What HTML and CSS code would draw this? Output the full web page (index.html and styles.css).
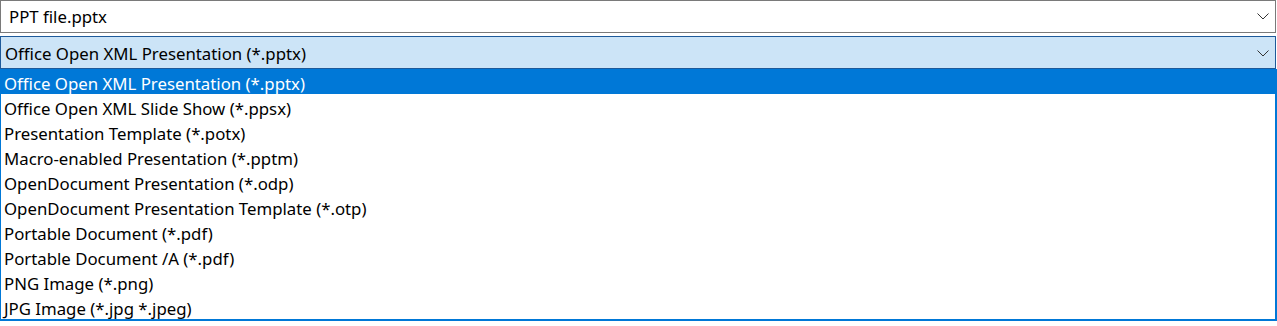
FILE: index.html
```html
<!DOCTYPE html>
<html>
<head>
<meta charset="utf-8">
<link rel="stylesheet" href="styles.css">
</head>
<body>
<div class="page">
  <div class="field">
    <span class="field-text">PPT file.pptx</span>
    <svg class="chev" width="12" height="7" viewBox="0 0 12 7"><path d="M0.5 0.5 L6 6 L11.5 0.5" fill="none" stroke="#333" stroke-width="1"/></svg>
  </div>
  <div class="dropdown">
    <div class="combo">
      <span class="combo-text">Office Open XML Presentation (*.pptx)</span>
      <svg class="chev" width="12" height="7" viewBox="0 0 12 7"><path d="M0.5 0.5 L6 6 L11.5 0.5" fill="none" stroke="#333" stroke-width="1"/></svg>
    </div>
    <ul class="list">
      <li class="item selected">Office Open XML Presentation (*.pptx)</li>
      <li class="item">Office Open XML Slide Show (*.ppsx)</li>
      <li class="item">Presentation Template (*.potx)</li>
      <li class="item">Macro-enabled Presentation (*.pptm)</li>
      <li class="item">OpenDocument Presentation (*.odp)</li>
      <li class="item">OpenDocument Presentation Template (*.otp)</li>
      <li class="item">Portable Document (*.pdf)</li>
      <li class="item">Portable Document /A (*.pdf)</li>
      <li class="item">PNG Image (*.png)</li>
      <li class="item">JPG Image (*.jpg *.jpeg)</li>
    </ul>
  </div>
</div>
</body>
</html>
```
FILE: styles.css
```css
html, body {
  margin: 0;
  padding: 0;
  background: #ffffff;
}
.page {
  width: 1277px;
  font-family: "Noto Sans", "Open Sans", sans-serif;
  font-size: 16.8px;
  color: #000;
  display: flex;
  flex-direction: column;
  gap: 3px;
}
.field {
  box-sizing: border-box;
  width: 1276px;
  height: 33px;
  border: 1px solid #7a7a7a;
  display: flex;
  align-items: center;
  justify-content: space-between;
  padding: 0 6px 1px 8px;
  background: #fff;
}
.chev {
  display: block;
}
.dropdown {
  width: 1277px;
  display: flex;
  flex-direction: column;
}
.combo {
  box-sizing: border-box;
  width: 1276px;
  height: 33px;
  border: 1px solid #1e5a9a;
  background: #cce4f7;
  display: flex;
  align-items: center;
  justify-content: space-between;
  padding: 1px 6px 0 4px;
}
.list {
  list-style: none;
  margin: 0;
  padding: 0;
  box-sizing: border-box;
  width: 1277px;
  border-left: 1px solid #0078d7;
  border-right: 2px solid #0078d7;
  border-bottom: 2px solid #0078d7;
  box-shadow: 0 2px 2px rgba(0,0,0,0.25);
}
.item {
  box-sizing: border-box;
  height: 25px;
  padding-top: 4px;
  line-height: 21px;
  padding-left: 3px;
  white-space: nowrap;
}
.item.selected {
  background: #0078d7;
  color: #fff;
}
```
